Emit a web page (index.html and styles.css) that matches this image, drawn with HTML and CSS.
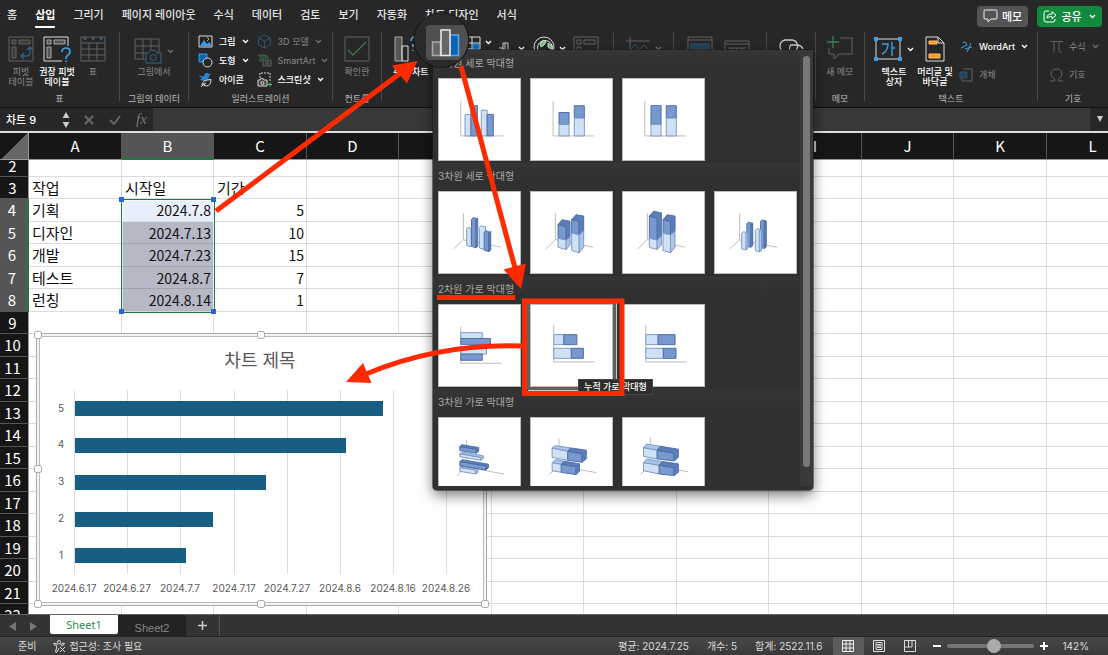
FILE: index.html
```html
<!DOCTYPE html>
<html lang="ko">
<head>
<meta charset="utf-8">
<title>차트 9</title>
<link rel="stylesheet" href="styles.css">
</head>
<body>
<svg class="defs" aria-hidden="true">
  <symbol id="chev" viewBox="0 0 7 5"><path d="M1 1l2.500 2.500L6 1" fill="none" stroke="currentColor" stroke-width="1.300"/></symbol>
</svg>
<div class="app">
  <header class="topbar">
    <nav class="tabs">
      <a href="#">홈</a><a href="#" class="current">삽입</a><a href="#">그리기</a><a href="#">페이지 레이아웃</a><a href="#">수식</a><a href="#">데이터</a><a href="#">검토</a><a href="#">보기</a><a href="#">자동화</a><a href="#">차트 디자인</a><a href="#">서식</a>
    </nav>
    <button class="pill memo"><svg width="15" height="14" viewBox="0 0 15 14"><path d="M2 1h11a1 1 0 0 1 1 1v7a1 1 0 0 1-1 1H8l-3 3v-3H2a1 1 0 0 1-1-1V2a1 1 0 0 1 1-1z" fill="none" stroke="#eee"/></svg>메모</button>
    <button class="pill share"><svg width="14" height="14" viewBox="0 0 14 14" fill="none" stroke="#fff"><path d="M6 2H3a2 2 0 0 0-2 2v7a2 2 0 0 0 2 2h7a2 2 0 0 0 2-2v-1"/><path d="M4 9c0-3 2-4 5-4V2.500l4 3.700-4 3.600V7.500C7 7.500 5 8 4 9z"/></svg>공유<svg width="7" height="5"><use href="#chev"/></svg></button>
  </header>

  <section class="ribbon">
    <div class="group g-tables">
      <div class="body">
        <button class="big dim"><svg width="26" height="26" viewBox="0 0 26 26" fill="none" stroke="#777"><path d="M1 1h24v24H1z"/><path d="M4 4h4v4H4zM11 4h11v4H11zM4 11h4v11H4z" fill="#444"/><path d="M13 20h6q3 0 3-3v-5M16 17l-3 3 3 3M19 14l3-3 3 3" stroke="#3574a8" stroke-width="1.300"/></svg><span>피벗<br>테이블</span></button>
        <button class="big"><svg width="28" height="26" viewBox="0 0 28 26" fill="none" stroke="#ddd"><path d="M25 10V1H1v24h18"/><path d="M4 4h4v4H4zM11 4h11v4H11zM4 11h4v11H4z" stroke="#aaa" fill="#555"/><path d="M19 16q0-4 4-4t4 3.500q0 2-2 3.500-2 1-2 4M23 24.500v1.500" stroke="#3f9fe4" stroke-width="1.700"/></svg><span>권장 피벗<br>테이블</span></button>
        <button class="big dim"><svg width="26" height="26" viewBox="0 0 26 26" fill="none" stroke="#777"><path d="M1 1h24v24H1zM1 7h24M1 13h24M1 19h24M9 7v18M17 7v18"/><path d="M3 2h4l-2 2.500zM11 2h4l-2 2.500zM19 2h4l-2 2.500z" fill="#3a7fb5" stroke="none"/></svg><span>표</span></button>
      </div>
      <div class="caption">표</div>
    </div>
    <div class="group g-picdata">
      <div class="body">
        <button class="big dim"><span class="iconrow"><svg width="28" height="26" viewBox="0 0 28 26" fill="none" stroke="#777"><path d="M1 1h24v13M1 1v20h10M1 8h24M1 15h11M9 1v20M17 1v13"/><path d="M12 15h3l1.500-2.500h5L23 15h4v10H12z" stroke="#3a78a8" fill="#272727"/><circle cx="19.500" cy="19.500" r="3" stroke="#3a78a8"/></svg><svg width="7" height="5"><use href="#chev"/></svg></span><span>그림에서</span></button>
      </div>
      <div class="caption">그림의 데이터</div>
    </div>
    <div class="group g-illust">
      <div class="body">
        <div class="stack">
          <button class="small"><svg width="15" height="13" viewBox="0 0 15 13"><path d="M1 1h13v11H1z" fill="#222" stroke="#ddd"/><path d="M2 11l4-6 3 4 2-2 3 4z" fill="#3d9be9"/><path d="M9 2l2 2-2 2" fill="none" stroke="#f39b2d"/></svg>그림<svg width="7" height="5"><use href="#chev"/></svg></button>
          <button class="small"><svg width="15" height="15" viewBox="0 0 15 15"><path d="M1 1h8v8H1z" fill="#0b63b5" stroke="#3d9be9"/><circle cx="9.500" cy="9.500" r="4.500" fill="#272727" stroke="#ddd"/></svg>도형<svg width="7" height="5"><use href="#chev"/></svg></button>
          <button class="small"><svg width="15" height="15" viewBox="0 0 15 15"><path d="M1 3q3 2 5 1 0-3 3-3 2 0 2 1l2 0-2 2q0 5-5 5-3 0-4-2 2 0 2-1-3-1-3-3z" fill="#2b83d0"/><path d="M4 13q0-5 9-5.500Q13 14 8 14q-3 0-2-3M3 14.500l5-3.500" fill="#272727" stroke="#ddd"/></svg>아이콘</button>
        </div>
        <div class="stack">
          <button class="small dim"><svg width="15" height="15" viewBox="0 0 15 15" fill="none" stroke="#34658c"><path d="M7.500 1l6 3v7l-6 3-6-3V4zM1.500 4l6 3 6-3M7.500 7v7"/></svg>3D 모델<svg width="7" height="5"><use href="#chev"/></svg></button>
          <button class="small dim"><svg width="15" height="13" viewBox="0 0 15 13"><path d="M1 1h8l3 3H6v3H2l2-3z" fill="#2f5c3b" stroke="#45704f"/><path d="M6 6h8v6H6zM8 8h4M8 10h4" fill="#333" stroke="#777"/></svg>SmartArt<svg width="7" height="5"><use href="#chev"/></svg></button>
          <button class="small"><svg width="15" height="15" viewBox="0 0 15 15" fill="none" stroke="#ddd"><path d="M3 6V1h10v9" stroke-dasharray="2 1"/><path d="M1 8h2l1-1.500h2L7 8h3v6H1z" fill="#444"/><circle cx="5.500" cy="11" r="1.500"/><path d="M11 12.500h4M13 10.500v4" stroke="#4ec46c"/></svg>스크린샷<svg width="7" height="5"><use href="#chev"/></svg></button>
        </div>
      </div>
      <div class="caption">일러스트레이션</div>
    </div>
    <div class="group g-control">
      <div class="body">
        <button class="big dim"><svg width="26" height="26" viewBox="0 0 26 26" fill="none"><path d="M1 1h24v24H1z" stroke="#777"/><path d="M4 14l5 5L22 6" stroke="#459258" stroke-width="1.300"/></svg><span>확인란</span></button>
      </div>
      <div class="caption">컨트롤</div>
    </div>
    <div class="group g-charts">
      <div class="body">
        <button class="big"><svg width="26" height="26" viewBox="0 0 26 26" fill="none" stroke="#aaa"><path d="M2 1h7v24H2z" fill="#555"/><path d="M9 10h6v15H9z" stroke="#ddd"/><path d="M18 5q0-4 4-4M20 8v3M20 14v1" stroke="#3f9fe4" stroke-width="1.700"/></svg><span>추천 차트</span></button>
        <span class="mini m-tree"><svg width="18" height="14" viewBox="0 0 18 14" fill="none" stroke="#ddd"><path d="M1 1h16v12H1zM9 1v12M1 7h16"/><path d="M10 8h6v5h-6z" fill="#0b63b5" stroke="#3d9be9"/></svg><svg width="7" height="5"><use href="#chev"/></svg></span>
        <span class="mini m-bars"><svg width="14" height="14" viewBox="0 0 14 14" fill="none" stroke="#ccc"><path d="M1 6h4v8M5 14V1h5v13M7 1v13"/></svg><svg width="7" height="5"><use href="#chev"/></svg></span>
        <span class="mini m-globe"><svg width="22" height="22" viewBox="0 0 22 22" fill="none" stroke="#ddd"><circle cx="11" cy="11" r="10"/><circle cx="12" cy="12" r="7.500"/><path d="M7 7l4-3 2 2-2 3-3 2zM15 7l4 3v4l-4-3z" fill="#7ac28a" stroke="#bfe6c7"/></svg><svg width="7" height="5"><use href="#chev"/></svg></span>
        <span class="mini dim m-pivot"><svg width="26" height="26" viewBox="0 0 26 26" fill="none" stroke="#777"><path d="M1 1h24v24H1zM4 4h4v4H4zM11 4h11v4H11zM4 11h4v11H4z"/></svg></span>
      </div>
    </div>
    <div class="group g-spark">
      <div class="body"><span class="mini dim"><svg width="26" height="20" viewBox="0 0 26 20" fill="none" stroke="#777"><path d="M1 5h24M5 1v18"/><path d="M6 13l4-5 4 6 5-5 4 4" stroke="#34658c"/></svg><svg width="7" height="5"><use href="#chev"/></svg></span></div>
    </div>
    <div class="group g-filter">
      <div class="body"><span class="mini dim"><svg width="26" height="26" viewBox="0 0 26 26" fill="none" stroke="#777"><path d="M1 1h24v24H1zM1 4h24"/><path d="M4 8h18v5H4z" fill="#24496b" stroke="#34658c"/></svg></span><span class="mini dim m-time"><svg width="26" height="22" viewBox="0 0 26 22" fill="none" stroke="#777"><path d="M1 1h24v20H1zM1 4h24M4 8h18M8 8v4M13 8v4M18 8v4"/></svg></span></div>
    </div>
    <div class="group g-link">
      <div class="body"><span class="mini"><svg width="26" height="20" viewBox="0 0 26 20" fill="none" stroke="#ccc" stroke-width="1.300"><path d="M9 13a6 6 0 0 1-2-12h7a6 6 0 0 1 4 10M17 13H13a5 5 0 0 1 0-7h7q4 1 5 4"/></svg></span></div>
    </div>
    <div class="group g-comment">
      <div class="body"><button class="big dim"><svg width="27" height="26" viewBox="0 0 27 26" fill="none" stroke="#777"><path d="M14 3h12v16H13l-5 5v-5H3v-6"/><path d="M7 1v12M1 7h12" stroke="#479c5d" stroke-width="1.300"/></svg><span>새 메모</span></button></div>
      <div class="caption">메모</div>
    </div>
    <div class="group g-text">
      <div class="body">
        <button class="big b-box"><span class="iconrow"><svg width="28" height="26" viewBox="0 0 28 26"><path d="M2 3h24v20H2z" fill="none" stroke="#ddd"/><path d="M0 1h4v4H0zM24 1h4v4h-4zM0 21h4v4H0zM24 21h4v4h-4z" fill="#3f9fe4"/><path d="M8 8h6q0 7-6 10M18 6v14M18 12h3" fill="none" stroke="#3f9fe4" stroke-width="1.400"/></svg><svg width="7" height="5"><use href="#chev"/></svg></span><span>텍스트<br>상자</span></button>
        <button class="big b-head"><svg width="20" height="26" viewBox="0 0 20 26"><path d="M1 1h12l6 6v18H1zM13 1v6h6" fill="none" stroke="#ddd"/><path d="M4 5h8v3H4zM4 18h11v4H4z" fill="#f39b2d" stroke="#ffc56e"/></svg><span>머리글 및<br>바닥글</span></button>
        <div class="stack wide">
          <button class="small"><svg width="14" height="13" viewBox="0 0 14 13" fill="none" stroke="#3f9fe4"><path d="M4 2q4 0 4 3L2 8M12 3L8 12M6 9l7-2"/></svg>WordArt<svg width="7" height="5"><use href="#chev"/></svg></button>
          <button class="small dim"><svg width="14" height="14" viewBox="0 0 14 14" fill="none" stroke="#777"><path d="M4 1h9v12H3v-2"/><path d="M1 4h7v6H1z" fill="#24496b" stroke="#34658c"/></svg>개체</button>
        </div>
      </div>
      <div class="caption">텍스트</div>
    </div>
    <div class="group g-symbol">
      <div class="body">
        <div class="stack wide">
          <button class="small dim"><svg width="13" height="13" viewBox="0 0 13 13" fill="none" stroke="#777"><path d="M0 1.500h13M4 1.500v11M9 1.500v9q0 2 3 2"/></svg>수식<svg width="7" height="5"><use href="#chev"/></svg></button>
          <button class="small dim"><svg width="13" height="14" viewBox="0 0 13 14" fill="none" stroke="#777"><path d="M0 13h4.500v-2Q1 9 1 6q0-5 5.500-5T12 6q0 3-3.500 5v2H13"/></svg>기호</button>
        </div>
      </div>
      <div class="caption">기호</div>
    </div>
  </section>

  <section class="formula">
    <input class="namebox" value="차트 9" aria-label="이름 상자">
    <svg class="step" width="8" height="18" viewBox="0 0 8 18"><path d="M4 1l3.500 6h-7zM4 17L.5 11h7z" fill="#ccc"/></svg>
    <div class="fxbtns">
      <svg width="10" height="10" viewBox="0 0 10 10"><path d="M1 1l8 8M9 1L1 9" stroke="#666" stroke-width="2"/></svg>
      <svg width="12" height="10" viewBox="0 0 12 10"><path d="M1 5l4 4 6-8" fill="none" stroke="#666" stroke-width="2"/></svg>
      <i>fx</i>
    </div>
    <input class="fxinput" aria-label="수식 입력줄">
    <svg class="expand" width="18" height="7" viewBox="0 0 18 7"><path d="M7 0h6l-3 6z" fill="#ccc"/></svg>
  </section>

  <main class="sheet">
    <table>
      <colgroup><col class="rowcol"><col class="w93"><col class="w92"><col class="w93"><col class="w92"><col class="w93"><col class="w92"><col class="w93"><col class="w92"><col class="w93"><col class="w92"><col class="w93"><col class="w92"></colgroup>
      <thead><tr><th class="corner"></th><th>A</th><th class="sel">B</th><th>C</th><th>D</th><th>E</th><th>F</th><th>G</th><th>H</th><th>I</th><th>J</th><th>K</th><th>L</th></tr></thead>
      <tbody id="rows"></tbody>
    </table>
    <div class="selection"><i></i><i></i><i></i><i></i></div>
    <div class="chart">
      <svg width="450" height="272" viewBox="37 334 450 272">
        <g stroke="#dcdcdc"><path d="M74.500 390v184M127.500 390v184M180.500 390v184M234.500 390v184M287.500 390v184M340.500 390v184M393.500 390v184M446.500 390v184"/></g>
        <g fill="#165f83"><rect x="75" y="401" width="308" height="15"/><rect x="75" y="438" width="271" height="15"/><rect x="75" y="475" width="191" height="15"/><rect x="75" y="512" width="138" height="15"/><rect x="75" y="548" width="111" height="15"/></g>
        <text class="c-title" x="260" y="367">차트 제목</text>
        <g class="c-lab"><text x="61" y="412">5</text><text x="61" y="448">4</text><text x="61" y="485">3</text><text x="61" y="522">2</text><text x="61" y="559">1</text>
        <text x="74" y="592">2024.6.17</text><text x="127" y="592">2024.6.27</text><text x="180" y="592">2024.7.7</text><text x="234" y="592">2024.7.17</text><text x="287" y="592">2024.7.27</text><text x="340" y="592">2024.8.6</text><text x="393" y="592">2024.8.16</text><text x="446" y="592">2024.8.26</text></g>
        <g fill="#fff" stroke="#a5a5a5"><rect x="34.500" y="331.500" width="7" height="7" rx="2"/><rect x="257.500" y="331.500" width="7" height="7" rx="2"/><rect x="481.500" y="331.500" width="7" height="7" rx="2"/><rect x="34.500" y="465.500" width="7" height="7" rx="2"/><rect x="34.500" y="600.500" width="7" height="7" rx="2"/><rect x="257.500" y="600.500" width="7" height="7" rx="2"/><rect x="481.500" y="600.500" width="7" height="7" rx="2"/></g>
      </svg>
    </div>
  </main>

  <footer class="sheettabs">
    <svg class="navs" width="28" height="10" viewBox="0 0 28 10"><path d="M7 0v9L0 4.500zM21 0v9l7-4.500z" fill="#777"/></svg>
    <button class="stab on">Sheet1</button><button class="stab">Sheet2</button><button class="add" aria-label="시트 추가"><svg width="9" height="9" viewBox="0 0 9 9"><path d="M0 4.500h9M4.500 0v9" stroke="#ccc" stroke-width="1.500"/></svg></button>
  </footer>
  <div class="status">
    <span class="ready">준비</span>
    <svg width="13" height="13" viewBox="0 0 13 13" fill="none" stroke="#ddd"><circle cx="6" cy="2.300" r="1.700"/><path d="M4.500 4.500L1 3q-1 1 0 1.500L4 6l-1.500 6q1 1 1.500 0L6 8M7.500 4.500L11 3q1 1 0 1.500L8 6M7 7l5 5M12 7l-5 5"/></svg>
    <span class="acc">접근성: 조사 필요</span>
    <span class="stat">평균: 2024.7.25</span><span class="stat">개수: 5</span><span class="stat">합계: 2522.11.6</span>
    <button class="view on" aria-label="기본"><svg width="12" height="12" viewBox="0 0 12 12" fill="none" stroke="#eee"><path d="M.5.5h11v11H.5zM4 0v12M8 0v12M0 4h12M0 8h12"/></svg></button>
    <button class="view" aria-label="페이지 레이아웃"><svg width="12" height="12" viewBox="0 0 12 12" fill="none" stroke="#ddd"><path d="M.5.5h11v11H.5zM3 2.500h6v7H3zM4 4.500h4M4 6h4M4 7.500h4"/></svg></button>
    <button class="view" aria-label="페이지 나누기"><svg width="12" height="12" viewBox="0 0 12 12" fill="none" stroke="#ddd"><path d="M.5.5h11v11H.5zM4.500 0v7M8 0v7M0 7h8"/></svg></button>
    <button class="zoom" aria-label="축소"><svg width="8" height="8"><path d="M0 4h8" stroke="#fff" stroke-width="2"/></svg></button>
    <input type="range" min="0" max="100" value="56" aria-label="확대/축소">
    <button class="zoom" aria-label="확대"><svg width="8" height="8"><path d="M0 4h8M4 0v8" stroke="#fff" stroke-width="2"/></svg></button>
    <span class="pct">142%</span>
  </div>

  <div class="gallery">
    <div class="list">
      <h3>2차원 세로 막대형</h3>
      <div class="cards">
        <button class="card"><svg viewBox="0 0 249 249"><path class="ax" d="M67 68v107h131"/><path class="l" d="M80 109h18v66H80zM130 96h18v79h-18z"/><path class="d" d="M98 82h20v93H98zM148 109h19v66h-19z"/></svg></button>
        <button class="card"><svg viewBox="0 0 249 249"><path class="ax" d="M68 68v107h125"/><path class="d" d="M86 103h31v37H86zM133 82h31v38h-31z"/><path class="l" d="M86 140h31v35H86zM133 120h31v55h-31z"/></svg></button>
        <button class="card"><svg viewBox="0 0 249 249"><path class="ax" d="M67 68v107h126"/><path class="d" d="M86 82h31v58H86zM133 82h31v38h-31z"/><path class="l" d="M86 140h31v35H86zM133 120h31v55h-31z"/></svg></button>
      </div>
      <h3>3차원 세로 막대형</h3>
      <div class="cards">
        <button class="card"><svg viewBox="0 0 249 249"><path class="ax" d="M75 66v81l-30 28M75 147l116 23"/><path class="l" d="M85 114l5-6 9 4v55l-3 1-11-4z"/><path class="d" d="M100 84l5-5 10 2v89l-3 1-12-4z"/><path class="s" d="M113 84l6-3v86l-6 4z"/><path class="l" d="M124 109l5-5 14 3v65l-6 4-13-4z"/><path class="d" d="M139 123l5-4 9 3v61l-14-4z"/><path class="s" d="M153 125l6-4v58l-6 4z"/></svg></button>
        <button class="card"><svg viewBox="0 0 249 249"><path class="ax" d="M75 66v80l-29 29M75 146l116 24"/><path class="d" d="M83 100l25 7v41l-25-6z"/><path class="s" d="M83 100l13-15 24 5v47l-12 11v-41z"/><path class="l" d="M83 142l25 6v29l-25-7z"/><path class="m" d="M108 148l12-10v25l-12 14z"/><path class="d" d="M125 85l23 5v42l-23-6z"/><path class="s" d="M125 85l13-15 24 4v46l-14 12V90z"/><path class="l" d="M125 126l23 6v55l-23-7z"/><path class="m" d="M148 132l14-12v50l-14 17z"/></svg></button>
        <button class="card"><svg viewBox="0 0 249 249"><path class="ax" d="M75 66v80l-29 29M75 146l116 24"/><path class="d" d="M81 74l24 6v68l-24-6z"/><path class="s" d="M81 74l13-15 24 5v72l-13 12V80z"/><path class="l" d="M81 142l24 6v29l-24-7z"/><path class="m" d="M105 148l13-12v27l-13 14z"/><path class="d" d="M123 85l23 5v42l-23-6z"/><path class="s" d="M123 85l13-15 24 4v46l-14 12V90z"/><path class="l" d="M123 126l23 6v55l-23-7z"/><path class="m" d="M146 132l14-12v50l-14 17z"/></svg></button>
        <button class="card"><svg viewBox="0 0 249 249"><path class="ax" d="M76 66v81l-31 28M76 147l115 23"/><path class="d" d="M98 97l5-4 12 3v70l-5 4-12-3z"/><path class="s" d="M110 99l6-3v68l-6 5z"/><path class="l" d="M82 127l5-5 13 3v49l-6 4-12-3z"/><path class="m" d="M95 128l6-3v48l-6 5z"/><path class="d" d="M140 90l5-4 12 3v80l-5 5-12-4z"/><path class="s" d="M151 92l6-3v79l-6 5z"/><path class="l" d="M124 118l5-5 13 3v63l-6 5-12-4z"/><path class="m" d="M136 119l7-3v63l-7 5z"/></svg></button>
      </div>
      <h3>2차원 가로 막대형</h3>
      <div class="cards">
        <button class="card"><svg viewBox="0 0 249 249"><path class="ax" d="M67 66v113h126"/><path class="l" d="M67 85h66v18H67zM67 132h79v19H67z"/><path class="d" d="M67 103h91v18H67zM67 151h66v19H67z"/></svg></button>
        <button class="card hot"><svg viewBox="0 0 249 249"><path class="ax" d="M70 61v114h126"/><path class="l" d="M70 91h31v31H70zM70 133h54v31H70z"/><path class="d" d="M101 91h40v31h-40zM124 133h37v31h-37z"/></svg></button>
        <button class="card"><svg viewBox="0 0 249 249"><path class="ax" d="M70 61v114h126"/><path class="l" d="M70 91h38v31H70zM70 133h54v31H70z"/><path class="d" d="M108 91h52v31h-52zM124 133h39v31h-39z"/></svg></button>
      </div>
      <h3>3차원 가로 막대형</h3>
      <div class="cards">
        <button class="card"><svg viewBox="0 0 249 249"><path class="ax" d="M85 68v82l-29 27M85 150l116 23"/><path class="l" d="M64 152l49 8v12l-49-8z"/><path class="m" d="M64 152l7-4 49 8v11l-7 5v-12z"/><path class="d" d="M64 134l80 13v13l-80-13z"/><path class="s" d="M64 134l7-6 81 14v11l-8 7v-13z"/><path class="l" d="M64 110l64 11v9l-64-11z"/><path class="m" d="M64 110l7-5 65 11v9l-8 5v-9z"/><path class="d" d="M64 88l51 8v12l-51-8z"/><path class="s" d="M64 88l6-6 52 9v12l-7 5V96z"/></svg></button>
        <button class="card"><svg viewBox="0 0 249 249"><path class="ax" d="M86 63v85l-30 25M86 148l115 20"/><path class="l" d="M65 137l28 5v25l-28-5z"/><path class="d" d="M93 142l45 8v24l-45-7z"/><path class="m" d="M65 137l10-9 28 5-10 9z"/><path class="s" d="M93 142l10-9 46 8v23l-11 10v-24z"/><path class="l" d="M65 92l48 10v28l-48-9z"/><path class="d" d="M113 102l44 8v26l-44-6z"/><path class="m" d="M65 92l9-7 48 7-9 10z"/><path class="s" d="M113 102l9-10 48 7v26l-13 11v-26z"/></svg></button>
        <button class="card"><svg viewBox="0 0 249 249"><path class="ax" d="M84 61v85l-30 27M84 146l116 19"/><path class="l" d="M63 137l48 8v27l-48-10z"/><path class="d" d="M111 145l46 8v24l-46-5z"/><path class="m" d="M63 137l10-11 48 8-10 11z"/><path class="s" d="M111 145l10-11 49 7v26l-13 10v-24z"/><path class="l" d="M63 91l42 8v27l-42-8z"/><path class="d" d="M105 99l52 9v24l-52-6z"/><path class="m" d="M63 91l10-11 42 7-10 12z"/><path class="s" d="M105 99l10-12 55 9v25l-13 11v-24z"/></svg></button>
      </div>
    </div>
    <div class="track"><div class="thumb"></div></div>
  </div>
  <div class="tip" role="tooltip">누적 가로 막대형</div>

  <svg class="marks" width="1108" height="655" viewBox="0 0 1108 655" aria-hidden="true">
    <defs><clipPath id="lens"><circle cx="441.500" cy="40" r="26.500"/></clipPath></defs>
    <circle cx="441.500" cy="40" r="27.500" fill="#2a2a2a" stroke="#161616"/>
    <g clip-path="url(#lens)"><rect x="426" y="25" width="44" height="35" rx="4" fill="#505050"/></g>
    <path d="M432.500 42h8v13.500h-8z" fill="#666" stroke="#aaa" stroke-width="1.500"/>
    <path d="M450 35h8.500v20.500H450z" fill="#0b63b5" stroke="#5aaaf0" stroke-width="1.500"/>
    <path d="M441 30h9v25.500h-9z" fill="#666" stroke="#eee" stroke-width="1.500"/>
    <g fill="none" stroke="#ff2a00" stroke-width="5">
      <path d="M216 211L402 72"/><path d="M461 66L515 268"/><path d="M523 346Q440 343 366 374"/>
      <path d="M437 297.500h78"/><path d="M524.500 301h97.500v92.500h-97.500z"/>
    </g>
    <path d="M417.500 61l-25.500 4.500 15 18zM521 289l-17.500-19.500 22.500-6zM346 382l17-19 8.500 20z" fill="#ff2a00"/>
  </svg>
</div>
<script src="app.js"></script>
</body>
</html>
```
FILE: styles.css
```css
* { box-sizing: border-box; }
body { margin: 0; font-family: Inter, "Noto Sans CJK KR", sans-serif; font-size: 9px; color: #ddd; background: #272727; }
button { font: inherit; color: inherit; background: none; border: 0; padding: 0; }
input { font: inherit; color: inherit; border: 0; padding: 0; }
svg { flex: none; display: block; }
.defs { position: absolute; width: 0; height: 0; }
.app { position: relative; height: 100vh; display: flex; flex-direction: column; overflow: hidden; }

/* ribbon tabs */
.topbar { display: flex; align-items: center; height: 32px; padding-right: 6px; flex: none; }
.tabs { display: flex; gap: 18px; padding-left: 7px; flex: 1; font-size: 11px; font-weight: 500; line-height: 16px; white-space: nowrap; }
.tabs a { color: #e4e4e4; text-decoration: none; padding: 3px 0 3px; border-bottom: 2px solid transparent; border-radius: 1px; }
.tabs .current { border-color: #fff; color: #fff; font-weight: 700; }
.pill { display: flex; align-items: center; justify-content: center; gap: 4px; height: 21px; border-radius: 4px; font-size: 11px; font-weight: 500; color: #fff; }
.memo { width: 51px; background: #545454; margin-right: 9px; }
.share { width: 65px; background: #128a3e; }
.share svg:last-child { margin-left: 3px; }

/* ribbon */
.ribbon { display: grid; grid-template-columns: 120px 69px 144px 49px 232px 60px 93px 49px 49px 173px 1fr; height: 75px; flex: none; }
.group { display: flex; flex-direction: column; height: 69px; border-right: 1px solid #484848; }
.group:last-child { border: 0; }
.body { display: flex; flex: 1; padding-top: 4px; }
.caption { display: flex; align-items: center; justify-content: center; height: 8px; margin-bottom: -2px; color: #bbb; line-height: 10px; white-space: nowrap; }
.big { display: flex; flex-direction: column; align-items: center; gap: 5px; line-height: 10px; font-weight: 500; color: #fff; white-space: nowrap; height: 50px; }
.small { display: flex; align-items: center; gap: 6px; height: 15px; font-weight: 500; color: #fff; white-space: nowrap; }
.big.dim, .small.dim, .mini.dim { color: #8a8a8a; font-weight: 400; }
.dim svg { opacity: .75; }
.iconrow { display: flex; align-items: center; gap: 5px; }
.stack { display: flex; flex-direction: column; gap: 4px; }
.stack.wide { gap: 13px; padding-top: 3px; }
.g-tables .body { padding-left: 3px; }
.g-tables .big { width: 36px; }
.g-picdata .body { padding: 6px 0 0 14px; }
.g-picdata .big { gap: 3px; }
.g-illust .body { padding: 2px 0 0 9px; gap: 8px; }
.g-control .body { padding-left: 11px; }
.g-charts .body { padding-left: 11px; }
.mini { display: flex; align-items: flex-start; gap: 4px; color: #fff; }
.mini svg + svg { margin-top: 10px; }
.m-tree { margin-left: 32px; }
.m-tree svg + svg { margin-top: 4px; }
.m-bars { margin-left: 6px; padding-top: 6px; }
.m-bars svg + svg { margin-top: 4px; margin-left: 2px; }
.m-globe { margin-left: 8px; }
.m-pivot { margin-left: 7px; }
.g-charts .big { width: 38px; align-items: flex-start; }
.g-spark .body, .g-link .body { padding-left: 11px; }
.g-filter .body { padding-left: 13px; }
.m-time { margin-left: 11px; padding-top: 4px; }
.g-link .body { padding-top: 7px; }
.g-comment .body { padding-left: 10px; padding-top: 3px; }
.g-comment .big { gap: 6px; }
.g-text .body { padding-left: 10px; }
.b-box { width: 38px; }
.b-head { width: 44px; }
.g-text .stack { margin-left: 2px; }
.g-symbol .body { padding-left: 12px; }

/* formula bar */
.formula { display: flex; align-items: center; height: 26px; flex: none; border-top: 1px solid #111; border-bottom: 2px solid #ddd; background: #272727; }
.namebox { width: 62px; height: 20px; padding: 0 0 2px 6px; background: transparent; font-size: 11px; font-weight: 500; color: #fff; }
.fxbtns { display: flex; align-items: center; gap: 15px; padding-left: 14px; width: 83px; }
.fxbtns i { font: italic 15px "Liberation Serif", serif; color: #777; }
.fxinput { flex: 1; min-width: 0; align-self: stretch; background: #383838; }

/* worksheet */
.sheet { position: relative; flex: 1; min-height: 0; overflow: hidden; background: #fff; color: #111; font-family: "Noto Sans CJK KR", sans-serif; }
table { table-layout: fixed; width: 1139px; border-collapse: separate; border-spacing: 0; }
.rowcol { width: 29px; }
.w93 { width: 93px; }
.w92 { width: 92px; }
th, td { padding: 0; font-weight: 400; line-height: 20px; white-space: nowrap; }
th { background: #161616; color: #fff; font-size: 15px; }
thead th { height: 27px; border-right: 1px solid #555; border-bottom: 1px solid #999; }
thead .sel { background: #555; border-bottom: 2px solid #1c7a42; }
thead .corner { background: linear-gradient(135deg, #161616 50%, #666 50%); border-right: 1px solid #999; }
tbody th { padding-right: 3px; border-right: 1px solid #999; border-bottom: 1px solid #555; }
tbody th.sel { background: #555; border-right: 2px solid #1c7a42; }
td { border-right: 1px solid #dcdcdc; border-bottom: 1px solid #dcdcdc; font-size: 15px; padding-left: 3px; }
td.num { text-align: right; padding-right: 2px; font-size: 14px; }
td.active { background: #e8eefb; }
td.fill { background: #b4b9c5; border-bottom-color: #9ea3ae; }
tr.odd > * { height: 22px; }
tr.even > * { height: 23px; }
tr.cut > * { height: 17px; line-height: 12px; padding-bottom: 4px; }
.selection { position: absolute; left: 121px; top: 66px; width: 94px; height: 114px; border: 1px solid #1c7a42; box-shadow: inset 0 0 0 1px #fff8; }
.selection i { position: absolute; width: 5px; height: 5px; background: #2a66d0; }
.selection i:nth-child(1) { left: -3px; top: -3px; }
.selection i:nth-child(2) { right: -2px; top: -3px; }
.selection i:nth-child(3) { left: -3px; bottom: -2px; }
.selection i:nth-child(4) { right: -2px; bottom: -2px; }
.chart { position: absolute; left: 36px; top: 200px; width: 451px; height: 273px; background: #fff; border: 1px solid #aaa; box-shadow: inset 0 0 0 2px #f4f4f4, inset 0 0 0 3px #bbb; }
.chart svg { overflow: visible; }
.c-title { font-size: 18px; fill: #595959; text-anchor: middle; }
.c-lab { font: 10px Inter, sans-serif; fill: #595959; text-anchor: middle; }

/* sheet tabs and status */
.sheettabs { display: flex; height: 23px; flex: none; background: #333; border-top: 1px solid #666; border-bottom: 1px solid #222; }
.navs { margin: 7px 13px 0 9px; }
.stab { width: 68px; font: 11px "Liberation Sans", sans-serif; color: #888; background: #222; padding-top: 4px; }
.stab.on { background: #fff; color: #1f8f4a; height: 19px; padding: 0; font-family: "Noto Sans", sans-serif; border-radius: 0 0 2px 2px; }
.add { width: 34px; display: flex; align-items: center; justify-content: center; border-right: 1px solid #555; }
.status { display: flex; align-items: center; height: 18px; flex: none; padding-right: 19px; background: linear-gradient(#484848, #393939); font-size: 10px; line-height: 14px; white-space: nowrap; color: #ddd; }
.ready { padding: 0 17px 0 18px; }
.acc { margin-left: 3px; flex: 1; }
.stat { margin-right: 18px; }
.stat + .view { margin-left: -8px; }
.view { width: 31px; height: 18px; display: flex; align-items: center; justify-content: center; }
.view.on { background: #5c5c5c; }
.zoom { padding: 0 1px; }
.view + .zoom { margin-left: 6px; }
input[type=range] { appearance: none; width: 87px; height: 14px; margin: 0 5px; background: transparent; }
input[type=range]::-webkit-slider-runnable-track { height: 4px; border-radius: 2px; background: #757575; }
input[type=range]::-webkit-slider-thumb { appearance: none; width: 14px; height: 14px; margin-top: -5px; border-radius: 50%; background: #aaa; }
.pct { margin-left: 14px; }

/* chart gallery menu */
.gallery { position: absolute; left: 433px; top: 50px; width: 380px; height: 440px; padding-bottom: 4px; display: flex; background: #303030; border-radius: 2px 2px 4px 4px; box-shadow: 0 0 0 1px #1c1c1c88, 0 5px 14px #0008; }
.list { flex: 1; overflow: hidden; }
.list h3 { margin: 0; height: 28px; padding-left: 5px; font-size: 10px; line-height: 27px; font-weight: 400; color: #a8a8a8; background: linear-gradient(#353535, #303030); background-size: 100% 20px; background-repeat: no-repeat; }
.cards { display: flex; gap: 9px; padding: 0 0 2px 5px; }
.card { width: 83px; height: 83px; background: #fff; border: 1px solid #bbb; flex: none; }
.card svg { width: 81px; height: 81px; }
.hot { position: relative; box-shadow: 0 0 0 3px #606060, 1px 1px 0 3px #ccc; }
.ax { fill: none; stroke: #bbb; stroke-width: 3; }
.l, .d, .s, .m { stroke-width: 3; stroke-linejoin: round; }
.l { fill: #cfe1f5; stroke: #7f98c4; }
.m { fill: #a9c6e8; stroke: #7f98c4; }
.d { fill: #7799cf; stroke: #4e6ea6; }
.s { fill: #5a7fb8; stroke: #4e6ea6; }
.track { width: 13px; background: #393939; padding: 6px 3px 19px; }
.thumb { width: 7px; height: 100%; border-radius: 4px; background: #787878; }
.tip { position: absolute; left: 578px; top: 379px; width: 75px; height: 16px; background: #2c2c2c; border: 1px solid #444; color: #fff; font-size: 9px; font-weight: 500; line-height: 14px; text-align: center; white-space: nowrap; }
.marks { position: absolute; left: 0; top: 0; pointer-events: none; }
```
FILE: app.js
```js
const data = {
  3: ["작업", "시작일", "기간"],
  4: ["기획", "2024.7.8", "5"],
  5: ["디자인", "2024.7.13", "10"],
  6: ["개발", "2024.7.23", "15"],
  7: ["테스트", "2024.8.7", "7"],
  8: ["런칭", "2024.8.14", "1"]
};
const body = document.getElementById("rows");
for (let r = 2; r <= 22; r++) {
  const tr = document.createElement("tr");
  tr.className = r === 2 ? "cut" : r % 2 ? "odd" : "even";
  const inRange = r >= 4 && r <= 8;
  const th = document.createElement("th");
  th.textContent = r;
  if (inRange) th.className = "sel";
  tr.append(th);
  for (let c = 0; c < 12; c++) {
    const td = document.createElement("td");
    td.textContent = (data[r] && data[r][c]) || "";
    if (inRange && c > 0) td.classList.add("num");
    if (inRange && c === 1) td.classList.add(r === 4 ? "active" : "fill");
    tr.append(td);
  }
  body.append(tr);
}
```
